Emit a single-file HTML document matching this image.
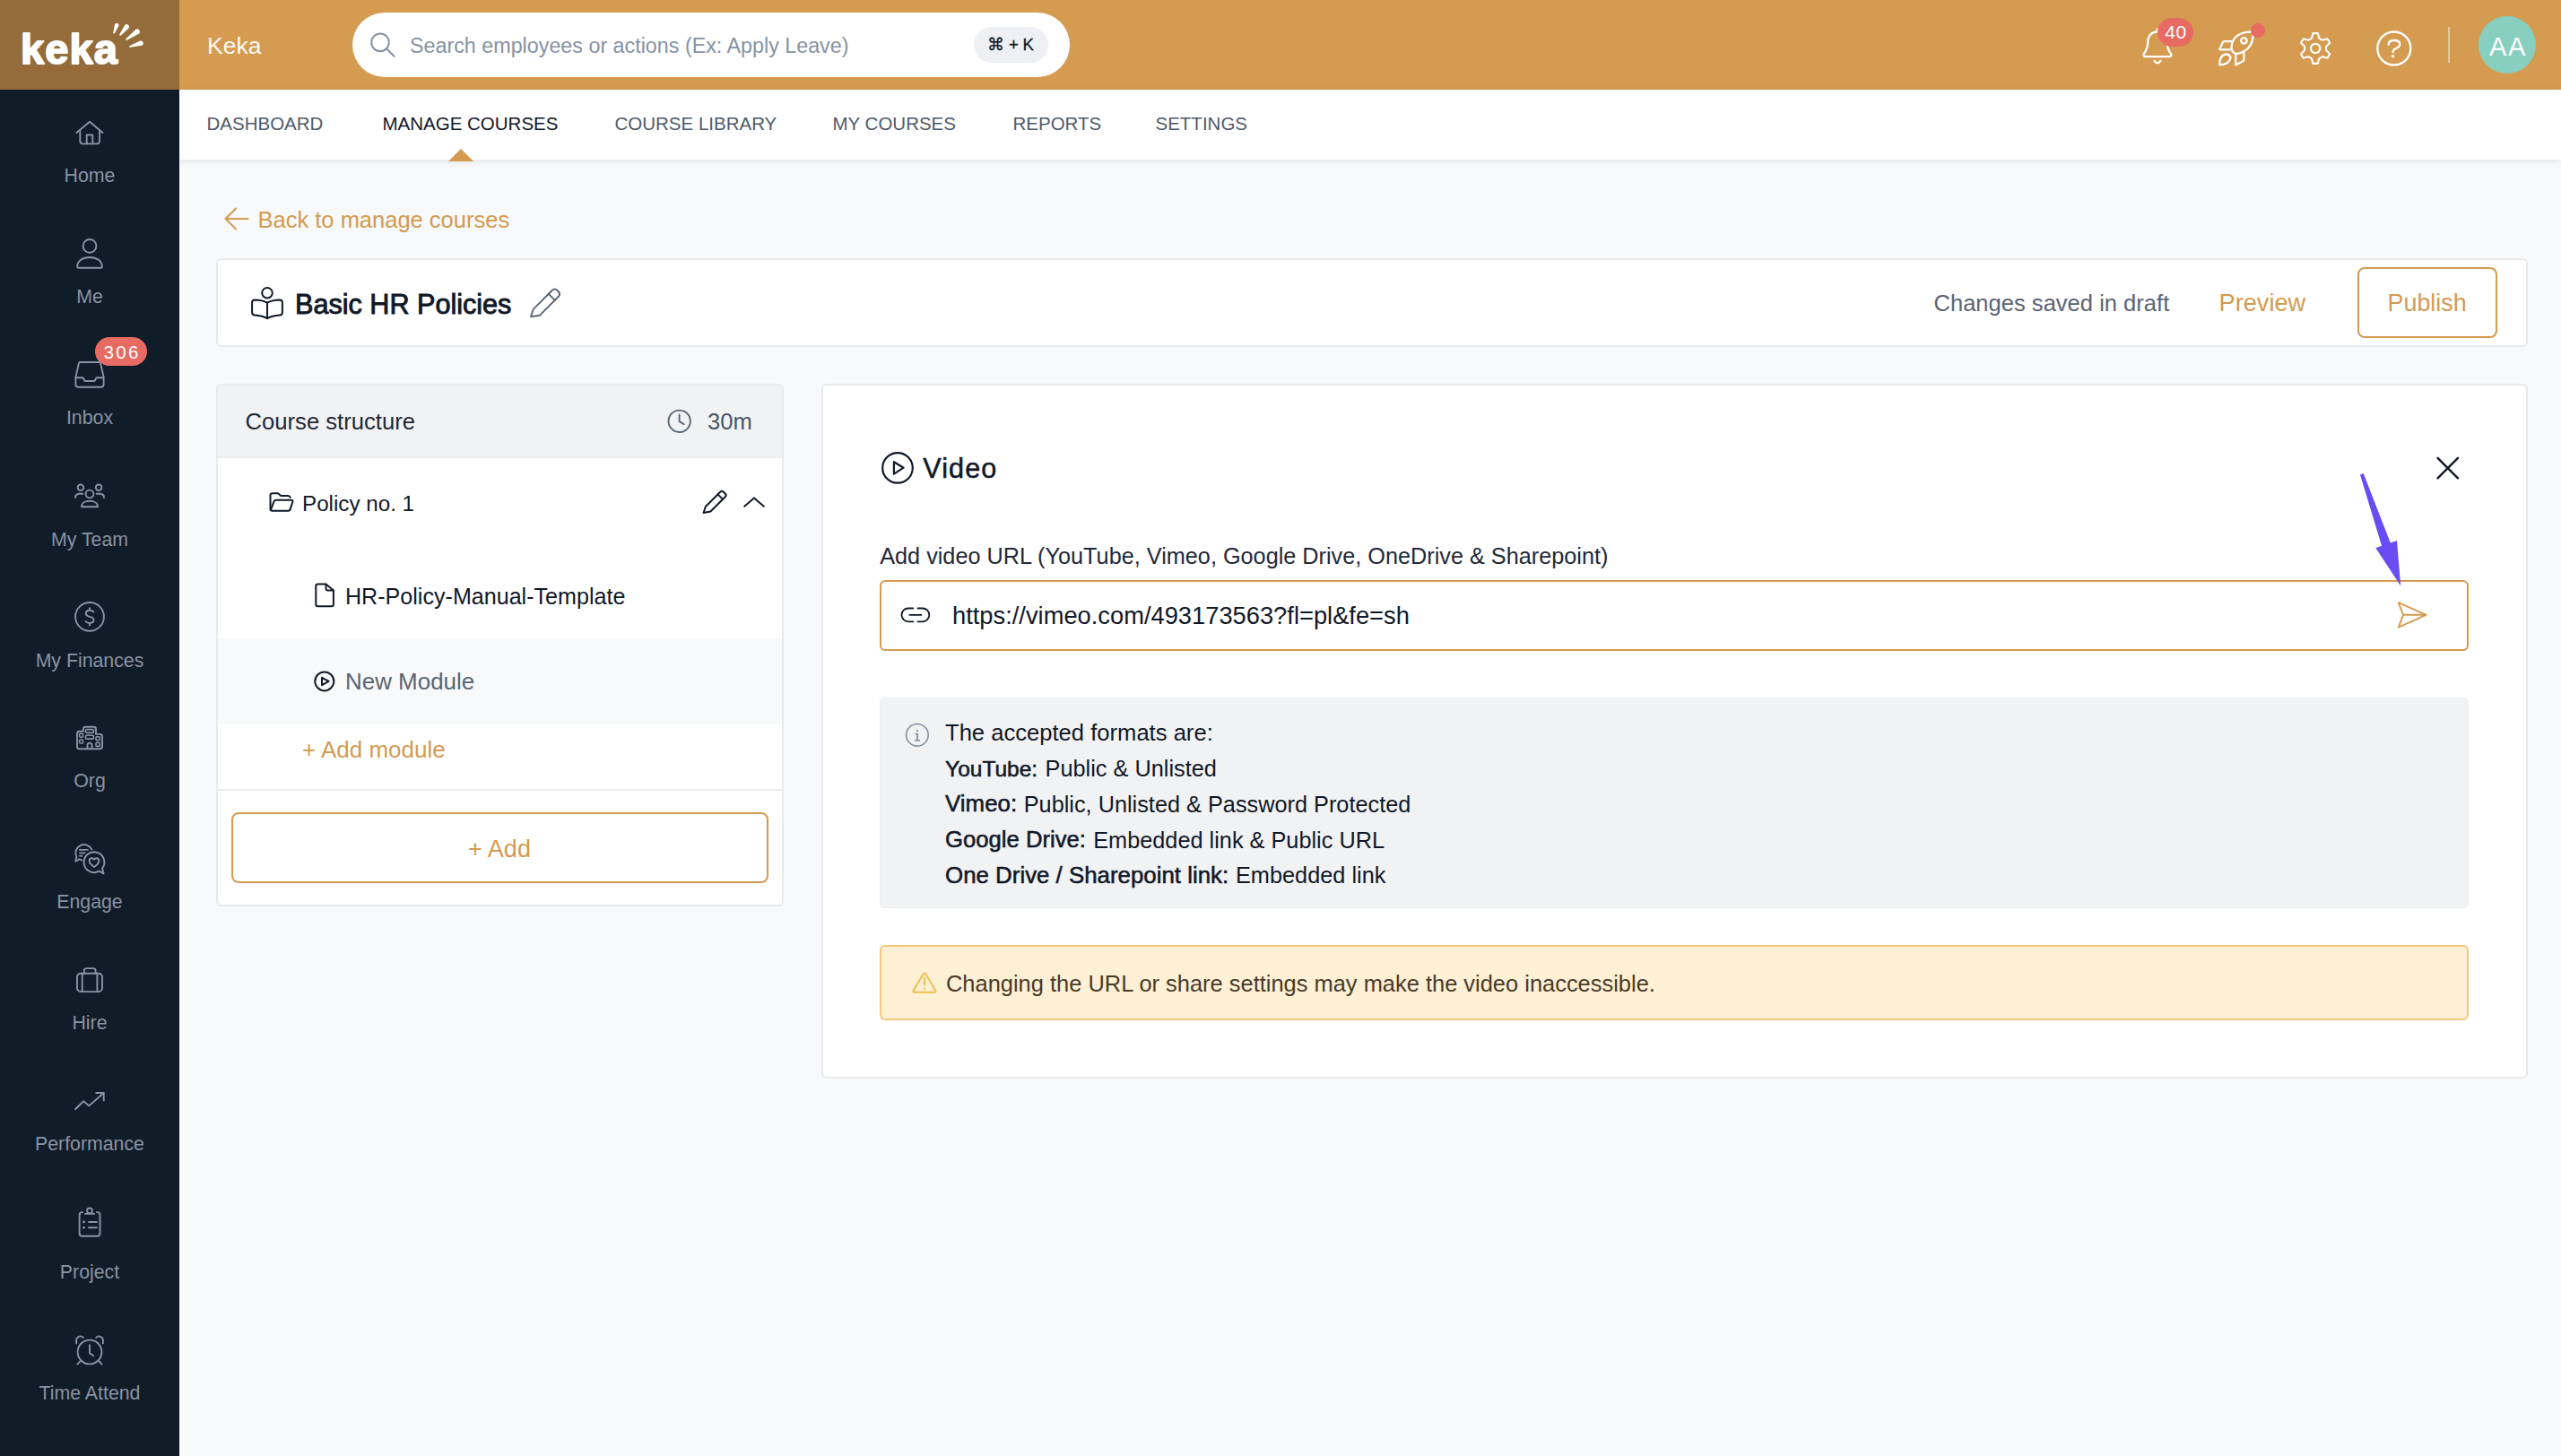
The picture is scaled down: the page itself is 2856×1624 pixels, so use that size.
<!DOCTYPE html><html><head><meta charset="utf-8"><style>
html,body{margin:0;padding:0;width:2856px;height:1624px;overflow:hidden;background:#f8f9fb;font-family:"Liberation Sans",sans-serif;}
.t{position:absolute;white-space:nowrap;}
.b{position:absolute;box-sizing:border-box;}
svg.ov{position:absolute;left:0;top:0;}
</style></head><body>
<div class="b" style="left:0px;top:0px;width:200px;height:100px;background:#946c39;"></div>
<div class="b" style="left:200px;top:0px;width:2656px;height:100px;background:#d59b50;"></div>
<div class="b" style="left:0px;top:100px;width:200px;height:1524px;background:#111c29;"></div>
<div class="b" style="left:200px;top:100px;width:2656px;height:78px;background:#ffffff;box-shadow:0 2px 8px rgba(17,24,39,0.10);"></div>
<div class="b" style="left:393px;top:14px;width:800px;height:72px;background:#fff;border-radius:36px;"></div>
<div class="b" style="left:1086px;top:30px;width:83px;height:40px;background:#eef0f3;border-radius:20px;"></div>
<div class="b" style="left:2730px;top:30px;width:2px;height:40px;background:rgba(255,255,255,0.45);"></div>
<div class="b" style="left:2764px;top:18px;width:64px;height:64px;background:#88cfc0;border-radius:50%;"></div>
<div class="b" style="left:241px;top:288px;width:2578px;height:99px;background:#fff;border:2px solid #e7e9ec;border-radius:6px;"></div>
<div class="b" style="left:241px;top:428px;width:633px;height:583px;background:#fff;border:2px solid #e7e9ec;border-radius:6px;overflow:hidden;"></div>
<div class="b" style="left:243px;top:430px;width:629px;height:81px;background:#f1f2f4;border-radius:4px 4px 0 0;border-bottom:2px solid #eceef1;"></div>
<div class="b" style="left:243px;top:712px;width:629px;height:96px;background:#f8f9fa;"></div>
<div class="b" style="left:243px;top:880px;width:629px;height:2px;background:#e8eaed;"></div>
<div class="b" style="left:258px;top:906px;width:599px;height:79px;border:2px solid #d49a4e;border-radius:8px;"></div>
<div class="b" style="left:916px;top:428px;width:1903px;height:775px;background:#fff;border:2px solid #e7e9ec;border-radius:6px;"></div>
<div class="b" style="left:981px;top:647px;width:1772px;height:79px;border:2px solid #d49a4e;border-radius:6px;"></div>
<div class="b" style="left:981px;top:778px;width:1772px;height:235px;background:#f1f2f4;border:1px solid #eaecef;border-radius:6px;"></div>
<div class="b" style="left:981px;top:1054px;width:1772px;height:84px;background:#fdf0d5;border:2px solid #f2c87d;border-radius:6px;"></div>
<div class="b" style="left:2629px;top:298px;width:156px;height:79px;border:2px solid #d49a4e;border-radius:8px;"></div>
<svg class="ov" width="2856" height="1624" viewBox="0 0 2856 1624">
<path d="M500 180 L514 166 L528 180 Z" fill="#d49a4e"/>
<text x="23" y="71.2" font-family="Liberation Sans" font-weight="700" font-size="47" fill="#fff" stroke="#fff" stroke-width="1.8" stroke-linejoin="round" letter-spacing="1.1">keka</text>
<g fill="#fff"><path d="M126.35 36.25 L127.94 27.26 A2.40 2.40 0 0 1 132.46 28.86 L128.05 36.85 A0.9 0.9 0 0 1 126.35 36.25 Z"/><path d="M133.35 38.34 L138.97 28.16 A2.80 2.80 0 0 1 143.36 31.63 L134.76 39.45 A0.9 0.9 0 0 1 133.35 38.34 Z"/><path d="M140.59 43.34 L151.21 32.95 A3.00 3.00 0 0 1 154.75 37.79 L141.66 44.79 A0.9 0.9 0 0 1 140.59 43.34 Z"/><path d="M144.70 50.98 L156.39 45.59 A2.70 2.70 0 0 1 157.94 50.76 L145.22 52.70 A0.9 0.9 0 0 1 144.70 50.98 Z"/></g>
<g fill="none" stroke="#8a93a2" stroke-width="1.9" stroke-linecap="round" stroke-linejoin="round">
<path d="M85.4 147.9 L100 135.7 L114.5 147.9"/>
<path d="M89.3 145.6 V156.9 Q89.3 160.4 92.8 160.4 H107.5 Q111 160.4 111 156.9 V145.6"/>
<path d="M96.7 160.4 V150.5 H103.3 V160.4"/>
<circle cx="100" cy="274.4" r="7.4"/>
<path d="M86.2 297.5 C86.2 291 92 287 100 287 C108 287 113.8 291 113.8 297.5 Q113.8 298.8 112.5 298.8 H87.5 Q86.2 298.8 86.2 297.5 Z"/>
<path d="M89.5 404 H110.5 Q111.8 404 112.1 405.3 L115.6 420.6 V429 Q115.6 431.7 112.9 431.7 H87.1 Q84.4 431.7 84.4 429 V420.6 L87.9 405.3 Q88.2 404 89.5 404 Z"/>
<path d="M84.6 421.2 H92.5 L94.6 425 H105.4 L107.5 421.2 H115.4"/>
<circle cx="89.9" cy="543.8" r="3.3"/><circle cx="110.1" cy="543.8" r="3.3"/><circle cx="100" cy="551" r="4.4"/>
<path d="M91 565.2 C91 561 95 558.8 100 558.8 C105 558.8 109 561 109 565.2 Z"/>
<path d="M92.4 550.7 H88.5 Q84 551 84 555"/><path d="M107.6 550.7 H111.5 Q116 551 116 555"/>
<circle cx="100" cy="687.9" r="15.9"/>
<path d="M100 678.2 V680.8 M100 695 V697.6"/>
<path d="M104.4 682.5 Q102.5 680.8 100 680.8 Q95.8 680.8 95.8 684.2 Q95.8 686.8 100 687.8 Q104.6 688.9 104.6 691.6 Q104.6 695 100 695 Q97.2 695 95.5 693.2"/>
<path d="M93 835.2 H88.5 Q86 835.2 86 832.7 V818.3 Q86 815.8 88.5 815.8 H92.8 V813.2 Q92.8 810.7 95.3 810.7 H104.6 Q107 810.7 107 813.2 V818.9 H111.5 Q114 818.9 114 821.4 V832.7 Q114 835.2 111.5 835.2 Z"/>
<g stroke-width="1.6"><rect x="95.5" y="813.6" width="8.9" height="3.8" rx="1.2"/><rect x="95.5" y="820.3" width="8.9" height="3.8" rx="1.2"/><rect x="88.6" y="818.3" width="4" height="4" rx="1"/><rect x="88.6" y="825" width="4" height="4" rx="1"/><rect x="107" y="821.7" width="4.2" height="4.1" rx="1"/><rect x="107" y="828.3" width="4.2" height="4.1" rx="1"/></g>
<path d="M97.5 835 V831.3 Q97.5 828.6 100 828.6 Q102.5 828.6 102.5 831.3 V835"/>
<path d="M102.3 947.3 A9.2 9.2 0 1 0 85.3 955.8 L84.2 960.8 L88.4 958.4 L91.3 959.3"/>
<path d="M88.9 947.9 H97.9 M88.9 951.4 H94.7 M88.9 954.7 H91.4" stroke-width="1.7"/>
<path d="M110.5 971.7 A11.4 11.4 0 1 1 114 968.7 L115.6 974.4 Z"/>
<path d="M105 967 C101.5 964.6 99.6 962.6 99.6 960.2 C99.6 958.4 100.9 957.2 102.5 957.2 C103.6 957.2 104.5 957.8 105 958.7 C105.5 957.8 106.4 957.2 107.5 957.2 C109.1 957.2 110.4 958.4 110.4 960.2 C110.4 962.6 108.5 964.6 105 967 Z"/>
<rect x="86" y="1085.7" width="28" height="20.4" rx="4"/>
<path d="M93.8 1085.7 V1082.6 Q93.8 1080.1 96.3 1080.1 H104.1 Q106.6 1080.1 106.6 1082.6 V1085.7"/>
<path d="M91.7 1085.7 V1106.1 M108.4 1085.7 V1106.1"/>
<path d="M84 1237.2 L93.2 1228.2 L99.2 1233.4 L115.5 1219.2"/><path d="M107.2 1219 H115.7 V1227.4"/>
<path d="M92.2 1352.1 H91.6 Q88.6 1352.1 88.6 1355.1 V1375.7 Q88.6 1378.7 91.6 1378.7 H108.5 Q111.5 1378.7 111.5 1375.7 V1355.1 Q111.5 1352.1 108.5 1352.1 H107.9"/>
<path d="M95 1353.9 H105.1"/><circle cx="100" cy="1350.4" r="2.9"/>
<path d="M99 1363 H107.9 M99 1369.3 H107.9"/>
</g><g fill="#8a93a2"><circle cx="93.6" cy="1363" r="1.4"/><circle cx="93.6" cy="1369.3" r="1.4"/></g><g fill="none" stroke="#8a93a2" stroke-width="1.9" stroke-linecap="round" stroke-linejoin="round">
<circle cx="100" cy="1508" r="13.4"/>
<path d="M100 1500.1 V1509.2 L104.3 1512.3"/>
<path d="M85.2 1498.3 Q84 1491.2 89.5 1490.4 Q91.6 1490.3 92.8 1492"/><path d="M114.8 1498.3 Q116 1491.2 110.5 1490.4 Q108.4 1490.3 107.2 1492"/>
<path d="M90 1517.7 L86.4 1521.6 M110 1517.7 L113.6 1521.6"/>
</g>
<g fill="none" stroke="#fff" stroke-width="2.3" stroke-linecap="round" stroke-linejoin="round">
<path d="M2405.8 35 V32.4"/>
<path d="M2405.8 35.5 C2399 35.5 2395.2 40.5 2395.2 47 C2395.2 53.5 2393.5 56.5 2390.9 60 Q2389.6 62.9 2392.2 63.2 H2419.6 Q2422.3 62.9 2421 60 C2418.3 56.5 2416.6 53.5 2416.6 47 C2416.6 40.5 2412.6 35.5 2405.8 35.5 Z"/>
<path d="M2402.6 67.9 Q2405.9 72.8 2409.4 67.9"/>
<path d="M2492.5 59.7 C2488 57.5 2487.5 54 2489.3 48 C2491.3 41 2498 36 2510 35.3 Q2513 35.3 2512.8 38 C2512.5 48 2508 54.5 2502 57.5 C2497.5 59.8 2495 60.5 2492.5 59.7 Z"/>
<circle cx="2502.4" cy="45.3" r="3.2"/>
<path d="M2488.3 46.2 H2480.5 Q2479.2 46.2 2478.6 47.5 L2475.3 55.3 H2487"/>
<path d="M2493.2 60.5 V72.4 L2501 68.5 Q2502.4 67.7 2502.4 66.2 V58.8"/>
<path d="M2475.2 72.4 C2475.3 65 2478 61 2482 60.5 Q2486.3 60.4 2487.6 64 C2486.5 69.5 2481.5 72.4 2475.2 72.4 Z"/>
<path d="M2579.2 37.5 H2585 L2586.6 43.6 L2590.6 45.9 L2596.7 44.2 L2599.6 49.2 L2595.1 53.6 V58.2 L2599.6 62.6 L2596.7 67.6 L2590.6 65.9 L2586.6 68.2 L2585 74.3 H2579.2 L2577.6 68.2 L2573.6 65.9 L2567.5 67.6 L2564.6 62.6 L2569.1 58.2 V53.6 L2564.6 49.2 L2567.5 44.2 L2573.6 45.9 L2577.6 43.6 Z" transform="translate(2582.1,54) scale(0.92) translate(-2582.1,-54) translate(0,-1.9)"/>
<circle cx="2582.1" cy="54" r="5.1"/>
<circle cx="2669.8" cy="54" r="18.5"/>
<path d="M2663.6 49.8 C2663.6 46.6 2666.2 45 2670 45 C2674 45 2676.3 47 2676.3 49.6 C2676.3 52.5 2673.5 53.3 2670.7 54.8 Q2668.8 55.8 2668.8 57.5 V58.2"/>
</g>
<circle cx="2668.6" cy="62.8" r="1.75" fill="#fff"/>
<g fill="none" stroke="#8792a3" stroke-width="2.1" stroke-linecap="round"><circle cx="424" cy="47.3" r="9.8"/><path d="M431.3 54.6 L439.5 62.8"/></g>
<g fill="none" stroke="#d49a4e" stroke-width="2" stroke-linecap="round" stroke-linejoin="round"><path d="M251.5 244 H276.5 M263 232.5 L251.5 244 L263 255.5"/></g>
<g fill="none" stroke="#111827" stroke-width="2" stroke-linecap="round" stroke-linejoin="round">
<circle cx="298" cy="326.7" r="5.8"/>
<path d="M298 337.6 C294 335.3 288.5 334.5 284.2 334.4 Q281.1 334.4 281.1 337.4 V348.6 Q281.1 351.4 284 351.6 C289 352 294 353 298 355.2 C302 353 307 352 312 351.6 Q314.9 351.4 314.9 348.6 V337.4 Q314.9 334.4 311.8 334.4 C307.5 334.5 302 335.3 298 337.6 Z"/>
<path d="M298 337.6 V355"/>
<path d="M784.6 572 L786.9 565 L803.4 548.5 Q805 546.9 806.6 548.5 L808.9 550.8 Q810.5 552.4 808.9 554 L792.4 570.5 Z"/><path d="M800.5 551.4 L806 556.9"/>
<path d="M830.2 564.8 L841 555.4 L851.8 564.8"/>
<path d="M323.6 554.6 Q322.6 553 321 553 H313.3 L310.1 550.2 H303.6 Q301.5 550.2 301.5 552.3 V567.6 Q301.5 569.8 303.8 569.8 H321.8 Q323 569.8 323.5 568.4"/>
<path d="M302 568.6 L305.6 559.2 Q306.3 557.7 308 557.7 H324.6 Q326.9 557.7 326.4 559.8 L323.5 568.4"/>
<path d="M363.5 651.5 H354.6 Q352.3 651.5 352.3 653.8 V673.9 Q352.3 676.2 354.6 676.2 H369.6 Q371.9 676.2 371.9 673.9 V658.5 Z"/>
<path d="M363.5 651.8 V656.4 Q363.5 658.4 365.5 658.4 H371.6"/>
<circle cx="361.8" cy="759.9" r="10.5"/><path d="M359 755.8 L366.6 759.9 L359 764.1 Z"/>
<circle cx="1001" cy="521.9" r="16.8" stroke-width="2.2"/><path d="M996.9 515.2 L1007.6 521.7 L996.9 528.6 Z" stroke-width="2.2"/>
<path d="M2718.5 510.8 L2741 533.3 M2741 510.8 L2718.5 533.3" stroke-width="2.4"/>
<path d="M1018.4 678.5 H1012.9 A7.4 7.4 0 0 0 1012.9 693.3 H1018.4 M1023.5 678.5 H1028.9 A7.4 7.4 0 0 1 1028.9 693.3 H1023.5 M1014.4 685.9 H1027.4" stroke-width="1.8"/>
</g>
<g fill="none" stroke="#5b6575" stroke-width="1.9" stroke-linecap="round" stroke-linejoin="round">
<path d="M592 353.2 L594.8 344.8 L615.6 324 Q618.6 321 621.6 324 L622.6 325 Q625.6 328 622.6 331 L601.8 351.8 Z"/><path d="M611.6 327.6 L618.8 334.8"/>
</g>
<g fill="none" stroke="#5b6575" stroke-width="1.9" stroke-linecap="round" stroke-linejoin="round">
<circle cx="757.7" cy="469.8" r="12.2"/><path d="M757.6 462.4 V469.9 L762.7 473.3"/>
</g>
<g fill="none" stroke="#d49a4e" stroke-width="1.9" stroke-linecap="round" stroke-linejoin="round">
<path d="M2674.8 672.2 L2705.6 685.8 L2674.8 699.6 L2680.1 685.8 Z M2680.1 685.8 H2705.4"/>
</g>
<g fill="none" stroke="#8792a3" stroke-width="1.6" stroke-linecap="round">
<circle cx="1022.9" cy="819.8" r="12.3"/>
</g>
<g fill="#8792a3"><rect x="1022" y="818" width="1.9" height="8.2"/><rect x="1020.6" y="817.8" width="3.3" height="1.6"/><rect x="1020" y="825" width="6" height="1.7"/><rect x="1021.9" y="814" width="2" height="2"/></g>
<g fill="none" stroke="#eebd4c" stroke-width="1.9" stroke-linecap="round" stroke-linejoin="round">
<path d="M1029.3 1086.9 Q1031 1084.2 1032.7 1086.9 L1043.2 1104.4 Q1044.6 1106.7 1041.9 1106.7 H1020.1 Q1017.4 1106.7 1018.8 1104.4 Z"/><path d="M1031 1090.8 V1098.6"/>
</g><circle cx="1031" cy="1102.7" r="1.15" fill="#eebd4c"/>
<path d="M2632 529.4 L2635.7 527.9 L2665.8 605.6 L2673 603 L2677.2 653.5 L2649.4 611.3 L2656 608.7 Z" fill="#6a4cf5"/></svg>
<div class="b" style="left:2406px;top:20px;width:40px;height:32px;background:#e76b63;border-radius:16px;"></div>
<div class="b" style="left:2510px;top:26px;width:16px;height:16px;background:#e76b63;border-radius:50%;"></div>
<div class="b" style="left:105.8px;top:376px;width:58.2px;height:32px;background:#e76b63;border-radius:16px;"></div>
<div class="t" style="left:231.0px;top:35.9px;font-size:26.5px;line-height:31.80px;color:#fffaf3;font-weight:400;">Keka</div>
<div class="t" style="left:457.0px;top:37.9px;font-size:23.3px;line-height:27.96px;color:#8792a3;font-weight:400;">Search employees or actions (Ex: Apply Leave)</div>
<div class="t" style="left:1101.2px;top:39.4px;font-size:18.6px;line-height:22.32px;color:#111827;font-weight:400;-webkit-text-stroke:0.3px #111827;letter-spacing:-0.2px;">&#8984; + K</div>
<div class="t" style="left:2126.5px;width:600px;text-align:center;top:22.8px;font-size:21px;line-height:25.20px;color:#ffffff;font-weight:400;letter-spacing:0.6px;">40</div>
<div class="t" style="left:2497.0px;width:600px;text-align:center;top:34.5px;font-size:29px;line-height:34.80px;color:#ffffff;font-weight:400;letter-spacing:1.6px;">AA</div>
<div class="t" style="left:-163.9px;width:600px;text-align:center;top:380.6px;font-size:20.5px;line-height:24.60px;color:#ffffff;font-weight:400;letter-spacing:2.4px;">306</div>
<div class="t" style="left:230.5px;top:126.1px;font-size:20.5px;line-height:24.60px;color:#505a68;font-weight:400;">DASHBOARD</div>
<div class="t" style="left:426.5px;top:126.1px;font-size:20.5px;line-height:24.60px;color:#111827;font-weight:400;">MANAGE COURSES</div>
<div class="t" style="left:685.5px;top:126.1px;font-size:20.5px;line-height:24.60px;color:#505a68;font-weight:400;">COURSE LIBRARY</div>
<div class="t" style="left:928.5px;top:126.1px;font-size:20.5px;line-height:24.60px;color:#505a68;font-weight:400;">MY COURSES</div>
<div class="t" style="left:1129.5px;top:126.1px;font-size:20.5px;line-height:24.60px;color:#505a68;font-weight:400;">REPORTS</div>
<div class="t" style="left:1288.5px;top:126.1px;font-size:20.5px;line-height:24.60px;color:#505a68;font-weight:400;">SETTINGS</div>
<div class="t" style="left:-200.0px;width:600px;text-align:center;top:183.9px;font-size:21.3px;line-height:25.56px;color:#8a93a2;font-weight:400;">Home</div>
<div class="t" style="left:-200.0px;width:600px;text-align:center;top:318.6px;font-size:21.3px;line-height:25.56px;color:#8a93a2;font-weight:400;">Me</div>
<div class="t" style="left:-200.0px;width:600px;text-align:center;top:454.2px;font-size:21.3px;line-height:25.56px;color:#8a93a2;font-weight:400;">Inbox</div>
<div class="t" style="left:-200.0px;width:600px;text-align:center;top:589.9px;font-size:21.3px;line-height:25.56px;color:#8a93a2;font-weight:400;">My Team</div>
<div class="t" style="left:-200.0px;width:600px;text-align:center;top:724.6px;font-size:21.3px;line-height:25.56px;color:#8a93a2;font-weight:400;">My Finances</div>
<div class="t" style="left:-200.0px;width:600px;text-align:center;top:858.6px;font-size:21.3px;line-height:25.56px;color:#8a93a2;font-weight:400;">Org</div>
<div class="t" style="left:-200.0px;width:600px;text-align:center;top:993.7px;font-size:21.3px;line-height:25.56px;color:#8a93a2;font-weight:400;">Engage</div>
<div class="t" style="left:-200.0px;width:600px;text-align:center;top:1128.5px;font-size:21.3px;line-height:25.56px;color:#8a93a2;font-weight:400;">Hire</div>
<div class="t" style="left:-200.0px;width:600px;text-align:center;top:1264.2px;font-size:21.3px;line-height:25.56px;color:#8a93a2;font-weight:400;">Performance</div>
<div class="t" style="left:-200.0px;width:600px;text-align:center;top:1407.2px;font-size:21.3px;line-height:25.56px;color:#8a93a2;font-weight:400;">Project</div>
<div class="t" style="left:-200.0px;width:600px;text-align:center;top:1541.9px;font-size:21.3px;line-height:25.56px;color:#8a93a2;font-weight:400;">Time Attend</div>
<div class="t" style="left:287.5px;top:229.7px;font-size:25.5px;line-height:30.60px;color:#d49a4e;font-weight:400;">Back to manage courses</div>
<div class="t" style="left:329.0px;top:321.0px;font-size:30.6px;line-height:36.72px;color:#111827;font-weight:400;-webkit-text-stroke:0.9px #111827;">Basic HR Policies</div>
<div class="t" style="left:2156.5px;top:323.4px;font-size:25.55px;line-height:30.66px;color:#5a6474;font-weight:400;">Changes saved in draft</div>
<div class="t" style="left:2474.5px;top:321.9px;font-size:27.2px;line-height:32.64px;color:#d49a4e;font-weight:400;">Preview</div>
<div class="t" style="left:2662.5px;top:322.1px;font-size:26.9px;line-height:32.28px;color:#d49a4e;font-weight:400;">Publish</div>
<div class="t" style="left:273.5px;top:455.3px;font-size:25.65px;line-height:30.78px;color:#1f2937;font-weight:400;">Course structure</div>
<div class="t" style="left:789.0px;top:455.4px;font-size:25.6px;line-height:30.72px;color:#4b5563;font-weight:400;">30m</div>
<div class="t" style="left:337.0px;top:546.9px;font-size:24.2px;line-height:29.04px;color:#111827;font-weight:400;">Policy no. 1</div>
<div class="t" style="left:385.0px;top:649.9px;font-size:25.1px;line-height:30.12px;color:#111827;font-weight:400;">HR-Policy-Manual-Template</div>
<div class="t" style="left:385.0px;top:744.8px;font-size:25.95px;line-height:31.14px;color:#5a6474;font-weight:400;">New Module</div>
<div class="t" style="left:337.0px;top:820.8px;font-size:26px;line-height:31.20px;color:#d49a4e;font-weight:400;">+ Add module</div>
<div class="t" style="left:257.0px;width:600px;text-align:center;top:931.2px;font-size:27px;line-height:32.40px;color:#d49a4e;font-weight:400;">+ Add</div>
<div class="t" style="left:1029.2px;top:504.2px;font-size:30.6px;line-height:36.72px;color:#111827;font-weight:400;-webkit-text-stroke:0.5px #111827;letter-spacing:1.1px;">Video</div>
<div class="t" style="left:981.2px;top:604.5px;font-size:25.25px;line-height:30.30px;color:#1f2937;font-weight:400;">Add video URL (YouTube, Vimeo, Google Drive, OneDrive &amp; Sharepoint)</div>
<div class="t" style="left:1062.0px;top:671.2px;font-size:27.3px;line-height:32.76px;color:#111827;font-weight:400;">https://vimeo.com/493173563?fl=pl&amp;fe=sh</div>
<div class="t" style="left:1054.0px;top:801.8px;font-size:25.6px;line-height:30.72px;color:#111827;font-weight:400;">The accepted formats are:</div>
<div class="t" style="left:1054.1px;top:842.6px;font-size:24.5px;line-height:29.40px;color:#111827;font-weight:400;-webkit-text-stroke:0.55px #111827;">YouTube:</div>
<div class="t" style="left:1165.6px;top:841.9px;font-size:25.3px;line-height:30.36px;color:#111827;font-weight:400;">Public &amp; Unlisted</div>
<div class="t" style="left:1054.1px;top:881.1px;font-size:25.85px;line-height:31.02px;color:#111827;font-weight:400;-webkit-text-stroke:0.55px #111827;">Vimeo:</div>
<div class="t" style="left:1141.7px;top:881.7px;font-size:25.3px;line-height:30.36px;color:#111827;font-weight:400;">Public, Unlisted &amp; Password Protected</div>
<div class="t" style="left:1054.1px;top:921.1px;font-size:25.65px;line-height:30.78px;color:#111827;font-weight:400;-webkit-text-stroke:0.55px #111827;">Google Drive:</div>
<div class="t" style="left:1219.2px;top:921.5px;font-size:25.3px;line-height:30.36px;color:#111827;font-weight:400;">Embedded link &amp; Public URL</div>
<div class="t" style="left:1054.1px;top:960.7px;font-size:25.85px;line-height:31.02px;color:#111827;font-weight:400;-webkit-text-stroke:0.55px #111827;">One Drive / Sharepoint link:</div>
<div class="t" style="left:1378.0px;top:961.3px;font-size:25.3px;line-height:30.36px;color:#111827;font-weight:400;">Embedded link</div>
<div class="t" style="left:1055.0px;top:1081.5px;font-size:25.45px;line-height:30.54px;color:#4a3a28;font-weight:400;">Changing the URL or share settings may make the video inaccessible.</div>
</body></html>
